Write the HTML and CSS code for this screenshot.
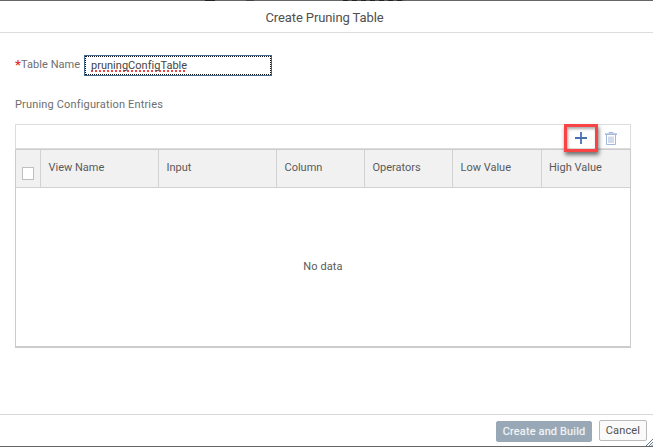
FILE: index.html
```html
<!DOCTYPE html>
<html lang="en">
<head>
<meta charset="utf-8">
<title>Create Pruning Table</title>
<link rel="stylesheet" href="styles.css">
</head>
<body>
<div class="dialog">
  <header class="dialog-header"><h1 class="title">Create Pruning Table</h1></header>
  <main class="content">
    <div class="field">
      <label class="label" for="name"><span class="required">*</span><span class="label-text">Table Name</span></label>
      <div class="input" id="name"><span class="value">pruningConfigTable</span></div>
    </div>
    <h2 class="section"><span>Pruning Configuration Entries</span></h2>
    <div class="toolbar">
      <div class="add">
        <svg width="12" height="12" viewBox="0 0 12 12"><path d="M6 0v12M0 6h12" stroke="#4a70b2" stroke-width="1.8"/></svg>
      </div>
      <svg class="trash" width="12" height="13" viewBox="0 0 12 13" fill="none" stroke="#a3b7da"><path d="M0 2.2h12" stroke-width="1.6"/><path d="M4 1.5v-1h4v1M1.5 3v9.5h9V3M4 4.5v6.5M6 4.5v6.5M8 4.5v6.5"/></svg>
    </div>
    <div class="table">
      <div class="row">
        <div class="cell check"><span class="box"></span></div>
        <div class="cell"><span>View Name</span></div>
        <div class="cell"><span>Input</span></div>
        <div class="cell"><span>Column</span></div>
        <div class="cell"><span>Operators</span></div>
        <div class="cell"><span>Low Value</span></div>
        <div class="cell"><span>High Value</span></div>
      </div>
      <div class="empty"><span>No data</span></div>
    </div>
  </main>
  <footer class="footer">
    <div class="btn primary"><span>Create and Build</span></div>
    <div class="btn"><span>Cancel</span></div>
    <svg class="grip" width="7" height="7" viewBox="0 0 7 7" stroke="#62788f" fill="none"><path d="M0 7L7 0M3 7L7 3M5.5 7L7 5.5"/></svg>
  </footer>
  <div class="backdrop"><i class="mark m1"></i><i class="mark m2"></i><i class="mark m3"></i></div>
</div>
</body>
</html>
```

FILE: styles.css
```css
* { box-sizing: border-box; }
body { margin: 0; background: #fff; font: 11px/16px Roboto, "Liberation Sans", sans-serif; color: #5a5a5a; }
svg { display: block; }
.dialog { position: relative; width: 653px; height: 447px; display: flex; flex-direction: column; border-top: 1px solid #666; border-bottom: 1px solid #666; }
.backdrop { position: absolute; top: -1px; left: 0; width: 100%; height: 1px; }
.mark { position: absolute; top: 0; height: 1px; background: #222; }
.m1 { left: 205px; width: 10px; }
.m2 { left: 246px; width: 8px; background: #444; }
.m3 { left: 343px; width: 62px; background: repeating-linear-gradient(90deg, #222 0 5px, #555 5px 9px); }
.dialog-header { height: 32px; border-bottom: 1px solid #ddd; display: flex; justify-content: center; padding: 8px 4px 0 0; }
.title { margin: 0; font-size: 13px; font-weight: 400; line-height: 17px; color: #505050; letter-spacing: -.1px; }
.content { flex: 1; padding: 22px 22px 0 15px; }
.field { display: flex; height: 21px; }
.label { width: 69px; display: flex; color: #6e6e6e; line-height: 19px; white-space: nowrap; }
.required { width: 6px; color: #d33; font-size: 13px; font-weight: 700; line-height: 19px; }
.label-text { letter-spacing: .05px; }
.input { width: 188px; height: 21px; border: 1px solid #44688f; outline: 1px dotted #111; outline-offset: -2px; padding-left: 6px; line-height: 19px; color: #444; }
.value { letter-spacing: .02px; text-decoration: underline dotted #e44; text-decoration-thickness: 1.5px; text-underline-offset: 1px; text-decoration-skip-ink: none; }
.section { margin: 20px 0 0; height: 28px; font-size: 11px; line-height: 17px; font-weight: 400; color: #6e6e6e; letter-spacing: .16px; }
.toolbar { height: 25px; border: 1px solid #ddd; display: flex; justify-content: flex-end; padding-right: 13px; }
.add { position: relative; z-index: 1; width: 34px; height: 28px; margin: -1px 7px 0 0; border: 3px solid #f84444; box-shadow: 1px 3px 4px #0008, inset 1px 2px 3px #0005; display: flex; align-items: center; justify-content: center; }
.trash { margin-top: 7px; }
.table { height: 199px; border: 1px solid #ccc; border-bottom: 2px solid #ccc; }
.row { display: grid; grid-template-columns: 25px 118px 118px 88px 88px 89px 1fr; height: 38px; background: #f1f1f1; border-bottom: 1px solid #d2d2d2; }
.cell { border-right: 1px solid #d2d2d2; padding: 10px 0 0 7.5px; white-space: nowrap; }
.cell:last-child { border-right: 0; padding-left: 7px; }
.check { padding: 17px 0 0 6px; }
.box { display: block; width: 12px; height: 13px; background: #fff; border: 1px solid #bfbfbf; }
.empty { height: 158px; display: flex; align-items: center; justify-content: center; letter-spacing: .1px; }
.footer { position: relative; height: 32px; border-top: 1px solid #d8d8d8; display: flex; justify-content: flex-end; gap: 7px; padding: 5px 6px 0 0; }
.btn { width: 48px; height: 21px; border: 1px solid #bbb; border-radius: 2px; background: #fafafa; line-height: 19px; text-align: center; color: #505050; letter-spacing: .15px; white-space: nowrap; }
.primary { width: 96px; margin-top: 1px; background: #98a8b6; border-color: #98a8b6; color: #f2f5f7; text-shadow: 0 0 1px #fff8; }
.grip { position: absolute; right: 0; bottom: 0; }
```
